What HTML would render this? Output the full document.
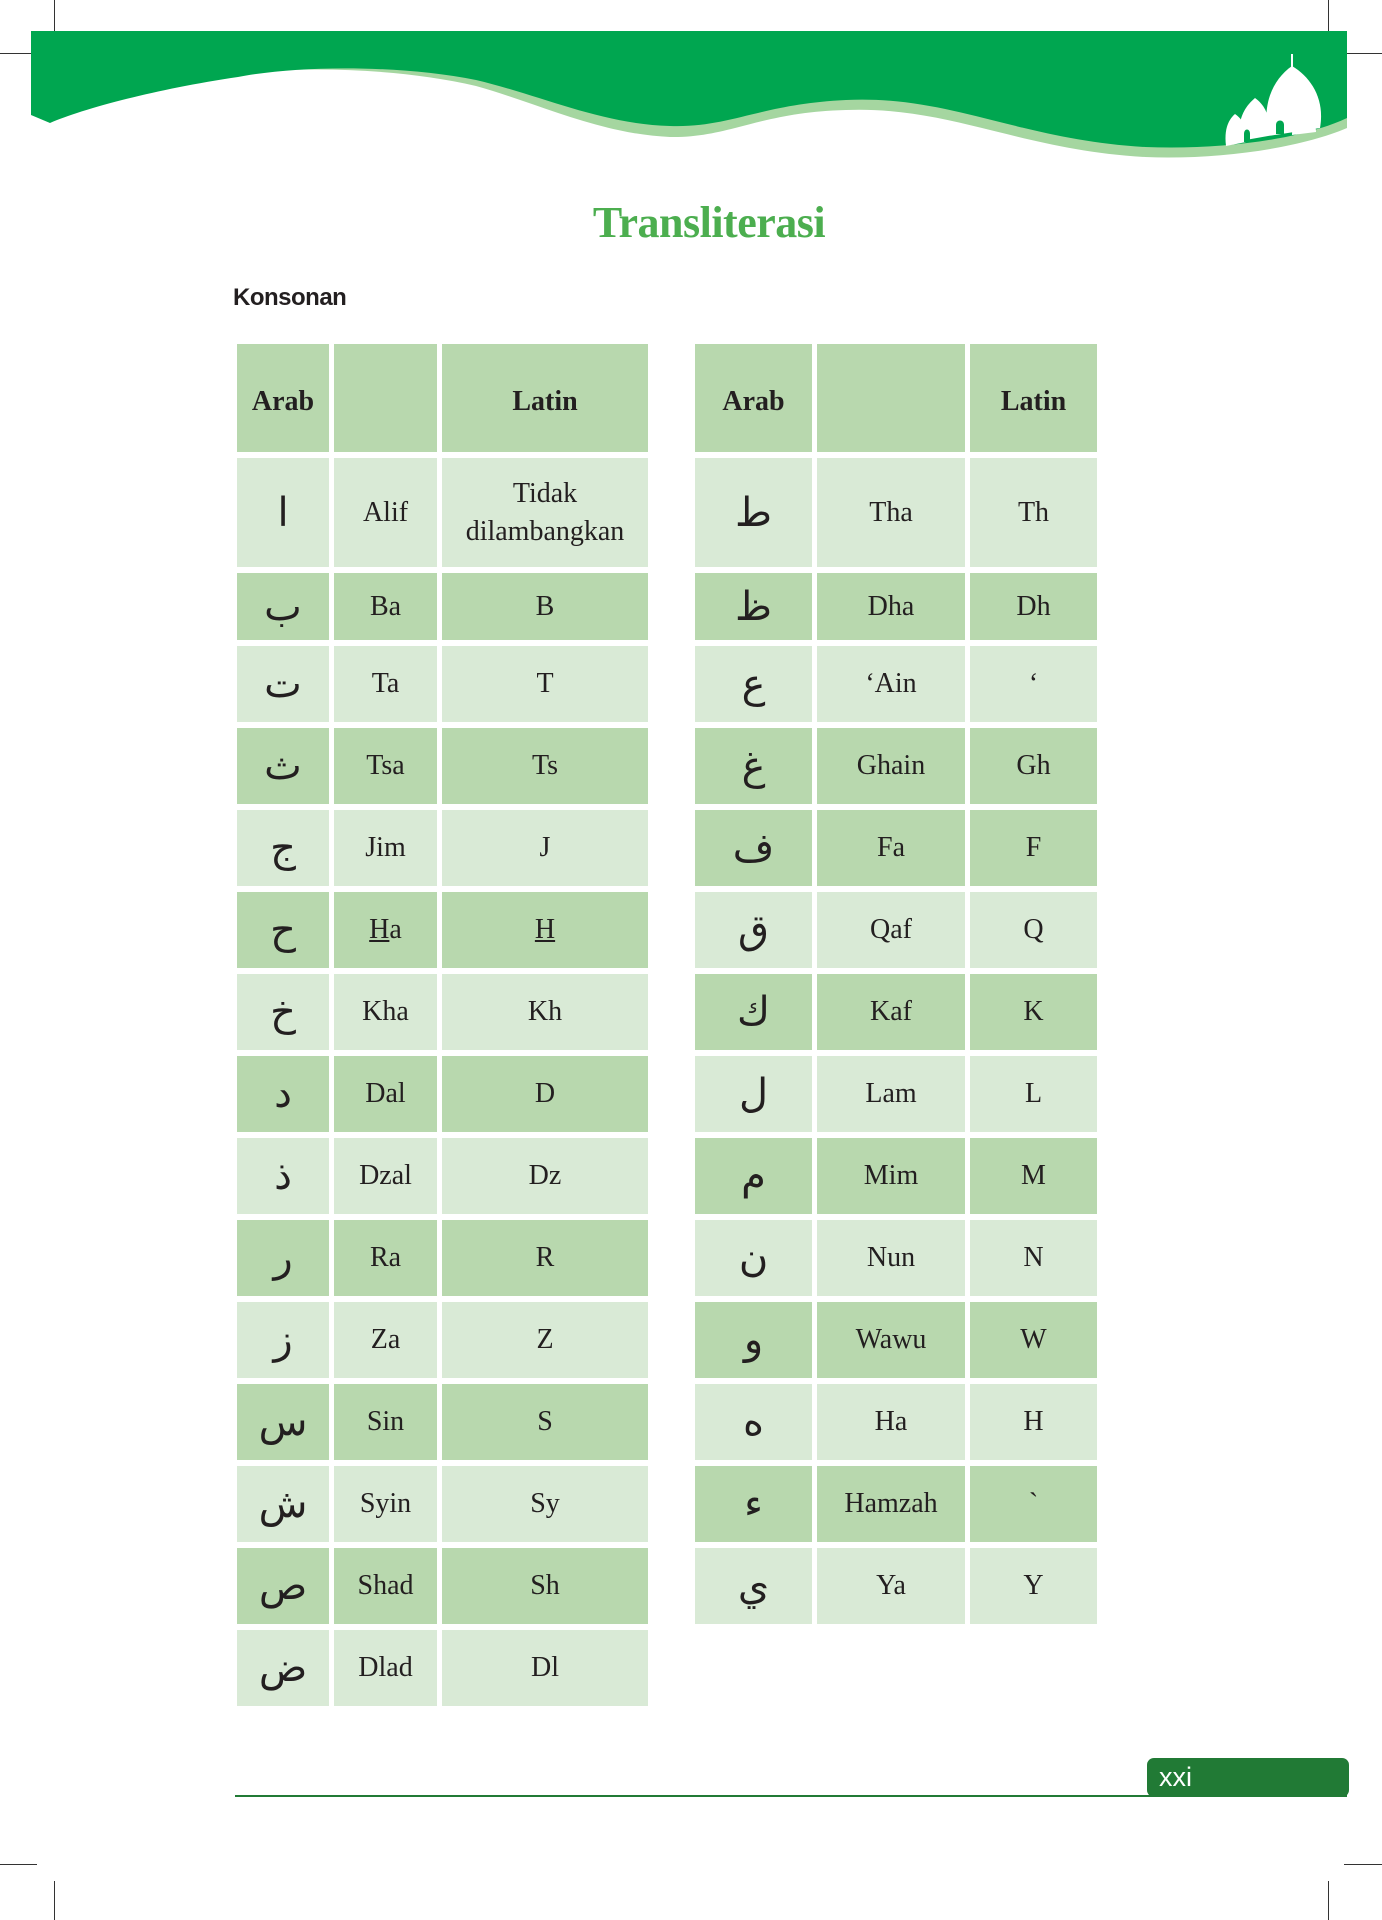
<!DOCTYPE html>
<html><head><meta charset="utf-8"><style>
html,body{margin:0;padding:0;background:#fff;}
body{width:1382px;height:1920px;position:relative;overflow:hidden;font-family:"Liberation Serif","DejaVu Serif",serif;}
.a{position:absolute;}
table{position:absolute;border-collapse:separate;border-spacing:5px 6px;top:338px;}
td{text-align:center;vertical-align:middle;font-size:28px;color:#231f20;padding:0;line-height:1.35;}
tr.h td{background:#b8d8ae;font-weight:bold;height:108px;}
tr.h td span{position:relative;top:4px;}
tr.d td{background:#b8d8ae;height:76px;}
tr.l td{background:#d9ead6;height:76px;}
tr.r1 td{height:109px;}
tr.r2 td{height:67px;}
td.ar{font-family:"DejaVu Sans",sans-serif;font-size:40px;line-height:1;}
</style></head><body>
<div class="a" style="left:54px;top:0;width:1px;height:55px;background:#333"></div>
<div class="a" style="left:0;top:53px;width:37px;height:1px;background:#333"></div>
<div class="a" style="left:1328px;top:0;width:1px;height:55px;background:#333"></div>
<div class="a" style="left:1347px;top:53px;width:35px;height:1px;background:#333"></div>
<div class="a" style="left:54px;top:1881px;width:1px;height:39px;background:#333"></div>
<div class="a" style="left:0;top:1864px;width:37px;height:1px;background:#333"></div>
<div class="a" style="left:1328px;top:1881px;width:1px;height:39px;background:#333"></div>
<div class="a" style="left:1344px;top:1864px;width:38px;height:1px;background:#333"></div>
<svg class="a" style="left:0;top:0" width="1382" height="200" viewBox="0 0 1382 200">
<path fill="#a5d6a0" d="M238,74 C300,66 400,68 476,86 C540,104 600,134 670,137 C730,138 760,112 846,110 C950,106 1020,150 1145,157 C1220,160 1300,148 1347,128 V31 H238 Z"/>
<path fill="#00a650" d="M31,31 H1347 V118 C1300,140 1220,150 1145,147 C1020,140 950,95 846,100 C760,104 730,128 670,126 C600,124 540,95 476,80 C400,65 300,65 238,77 C150,90 80,110 50,123 L31,115 Z"/>
<g fill="#fff">
<rect x="1291" y="54" width="2" height="14"/>
<path d="M1292,66 C1312,78 1325,100 1320,128 L1268,136 C1262,105 1272,80 1292,66 Z"/>
<path d="M1255,98 C1266,106 1271,118 1268,136 L1240,141 C1237,122 1243,108 1255,98 Z"/>
<path d="M1235,114 C1244,120 1247,130 1246,142 L1226,146 C1224,130 1228,120 1235,114 Z"/>
<path d="M1303,112 C1311,118 1316,124 1316,132 L1292,135 C1292,126 1296,118 1303,112 Z"/>
</g>
<g fill="#00a650">
<path d="M1244,134 C1244,128 1250,128 1250,134 V142 H1244 Z"/>
<path d="M1276,125 C1276,119 1284,119 1284,125 V134 H1276 Z"/>
</g>
</svg>
<div class="a" style="left:0;width:1418px;top:197px;text-align:center;font-size:44px;font-weight:bold;color:#4cae4f;letter-spacing:-0.5px;">Transliterasi</div>
<div class="a" style="left:233px;top:284px;font-family:'Liberation Sans',sans-serif;font-weight:bold;font-size:24px;color:#231f20;letter-spacing:-0.5px;">Konsonan</div>
<table style="left:232px">
<colgroup><col style="width:92px"><col style="width:103px"><col style="width:206px"></colgroup>
<tr class="h"><td><span>Arab</span></td><td></td><td><span>Latin</span></td></tr>
<tr class="l r1"><td class="ar">ا</td><td>Alif</td><td>Tidak<br>dilambangkan</td></tr>
<tr class="d r2"><td class="ar">ب</td><td>Ba</td><td>B</td></tr>
<tr class="l"><td class="ar">ت</td><td>Ta</td><td>T</td></tr>
<tr class="d"><td class="ar">ث</td><td>Tsa</td><td>Ts</td></tr>
<tr class="l"><td class="ar">ج</td><td>Jim</td><td>J</td></tr>
<tr class="d"><td class="ar">ح</td><td><u>H</u>a</td><td><u>H</u></td></tr>
<tr class="l"><td class="ar">خ</td><td>Kha</td><td>Kh</td></tr>
<tr class="d"><td class="ar">د</td><td>Dal</td><td>D</td></tr>
<tr class="l"><td class="ar">ذ</td><td>Dzal</td><td>Dz</td></tr>
<tr class="d"><td class="ar">ر</td><td>Ra</td><td>R</td></tr>
<tr class="l"><td class="ar">ز</td><td>Za</td><td>Z</td></tr>
<tr class="d"><td class="ar">س</td><td>Sin</td><td>S</td></tr>
<tr class="l"><td class="ar">ش</td><td>Syin</td><td>Sy</td></tr>
<tr class="d"><td class="ar">ص</td><td>Shad</td><td>Sh</td></tr>
<tr class="l"><td class="ar">ض</td><td>Dlad</td><td>Dl</td></tr>
</table>
<table style="left:690px">
<colgroup><col style="width:117px"><col style="width:148px"><col style="width:127px"></colgroup>
<tr class="h"><td><span>Arab</span></td><td></td><td><span>Latin</span></td></tr>
<tr class="l r1"><td class="ar">ط</td><td>Tha</td><td>Th</td></tr>
<tr class="d r2"><td class="ar">ظ</td><td>Dha</td><td>Dh</td></tr>
<tr class="l"><td class="ar">ع</td><td>‘Ain</td><td>‘</td></tr>
<tr class="d"><td class="ar">غ</td><td>Ghain</td><td>Gh</td></tr>
<tr class="d"><td class="ar">ف</td><td>Fa</td><td>F</td></tr>
<tr class="l"><td class="ar">ق</td><td>Qaf</td><td>Q</td></tr>
<tr class="d"><td class="ar">ك</td><td>Kaf</td><td>K</td></tr>
<tr class="l"><td class="ar">ل</td><td>Lam</td><td>L</td></tr>
<tr class="d"><td class="ar">م</td><td>Mim</td><td>M</td></tr>
<tr class="l"><td class="ar">ن</td><td>Nun</td><td>N</td></tr>
<tr class="d"><td class="ar">و</td><td>Wawu</td><td>W</td></tr>
<tr class="l"><td class="ar">ه</td><td>Ha</td><td>H</td></tr>
<tr class="d"><td class="ar">ء</td><td>Hamzah</td><td>`</td></tr>
<tr class="l"><td class="ar">ي</td><td>Ya</td><td>Y</td></tr>
</table>
<div class="a" style="left:235px;top:1795px;width:1112px;height:2px;background:#217a35"></div>
<div class="a" style="left:1147px;top:1758px;width:202px;height:39px;background:#217a35;border-radius:7px;"></div>
<div class="a" style="left:1159px;top:1762px;font-family:'Liberation Sans',sans-serif;font-size:27px;color:#fff;">xxi</div>
</body></html>
